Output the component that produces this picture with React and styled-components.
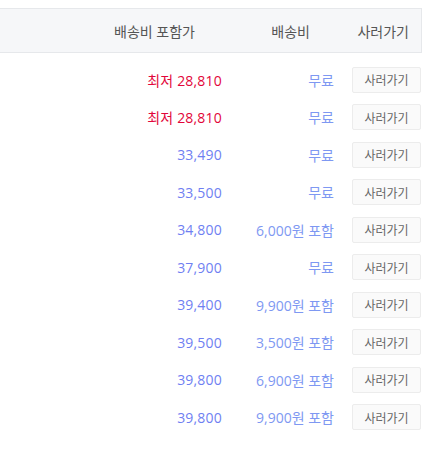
import React from 'react';
import styled, { createGlobalStyle } from 'styled-components';

const GlobalStyle = createGlobalStyle`
  body {
    margin: 0;
    background: #fff;
    font-family: "Open Sans", "Noto Sans CJK KR", sans-serif;
  }
`;

const Wrap = styled.div`
  width: 422px;
  padding-top: 8px;
`;

const Head = styled.div`
  display: grid;
  grid-template-columns: 230px 112px 80px;
  height: 45px;
  align-items: center;
  background: #f6f7f9;
  border: 1px solid #e6e8eb;
  border-left: none;
  box-sizing: border-box;
  font-size: 14px;
  color: #555;
`;

const HeadCell = styled.div`
  text-align: right;
  padding-right: ${p => p.pr}px;
`;

const List = styled.div`
  padding-top: 8px;
`;

const Row = styled.div`
  display: grid;
  grid-template-columns: 230px 112px 80px;
  height: 37.5px;
  align-items: center;
`;

const Price = styled.div`
  text-align: right;
  padding-right: 8px;
  font-size: 14px;
  letter-spacing: 0.2px;
  color: ${p => (p.lowest ? '#e2063a' : '#6f7ff2')};
`;

const Ship = styled.div`
  text-align: right;
  padding-right: 8px;
  font-size: 14px;
  color: #7e98f2;
`;

const BuyBtn = styled.button`
  margin-left: 10px;
  width: 69px;
  height: 26px;
  padding: 0;
  background: #fafafa;
  border: 1px solid #ececec;
  border-radius: 2px;
  font-family: "Noto Sans CJK KR", sans-serif;
  font-size: 12px;
  font-weight: 400;
  color: #666;
  cursor: pointer;
`;

const items = [
  { price: '최저 28,810', ship: '무료', lowest: true },
  { price: '최저 28,810', ship: '무료', lowest: true },
  { price: '33,490', ship: '무료' },
  { price: '33,500', ship: '무료' },
  { price: '34,800', ship: '6,000원 포함' },
  { price: '37,900', ship: '무료' },
  { price: '39,400', ship: '9,900원 포함' },
  { price: '39,500', ship: '3,500원 포함' },
  { price: '39,800', ship: '6,900원 포함' },
  { price: '39,800', ship: '9,900원 포함' },
];

const App = () => {
  return (
    <>
      <GlobalStyle />
      <Wrap>
        <Head>
          <HeadCell pr={35}>배송비 포함가</HeadCell>
          <HeadCell pr={32}>배송비</HeadCell>
          <HeadCell pr={13}>사러가기</HeadCell>
        </Head>
        <List>
          {items.map((item, i) => (
            <Row key={i}>
              <Price lowest={item.lowest}>{item.price}</Price>
              <Ship>{item.ship}</Ship>
              <div>
                <BuyBtn>사러가기</BuyBtn>
              </div>
            </Row>
          ))}
        </List>
      </Wrap>
    </>
  );
};

export default App;
